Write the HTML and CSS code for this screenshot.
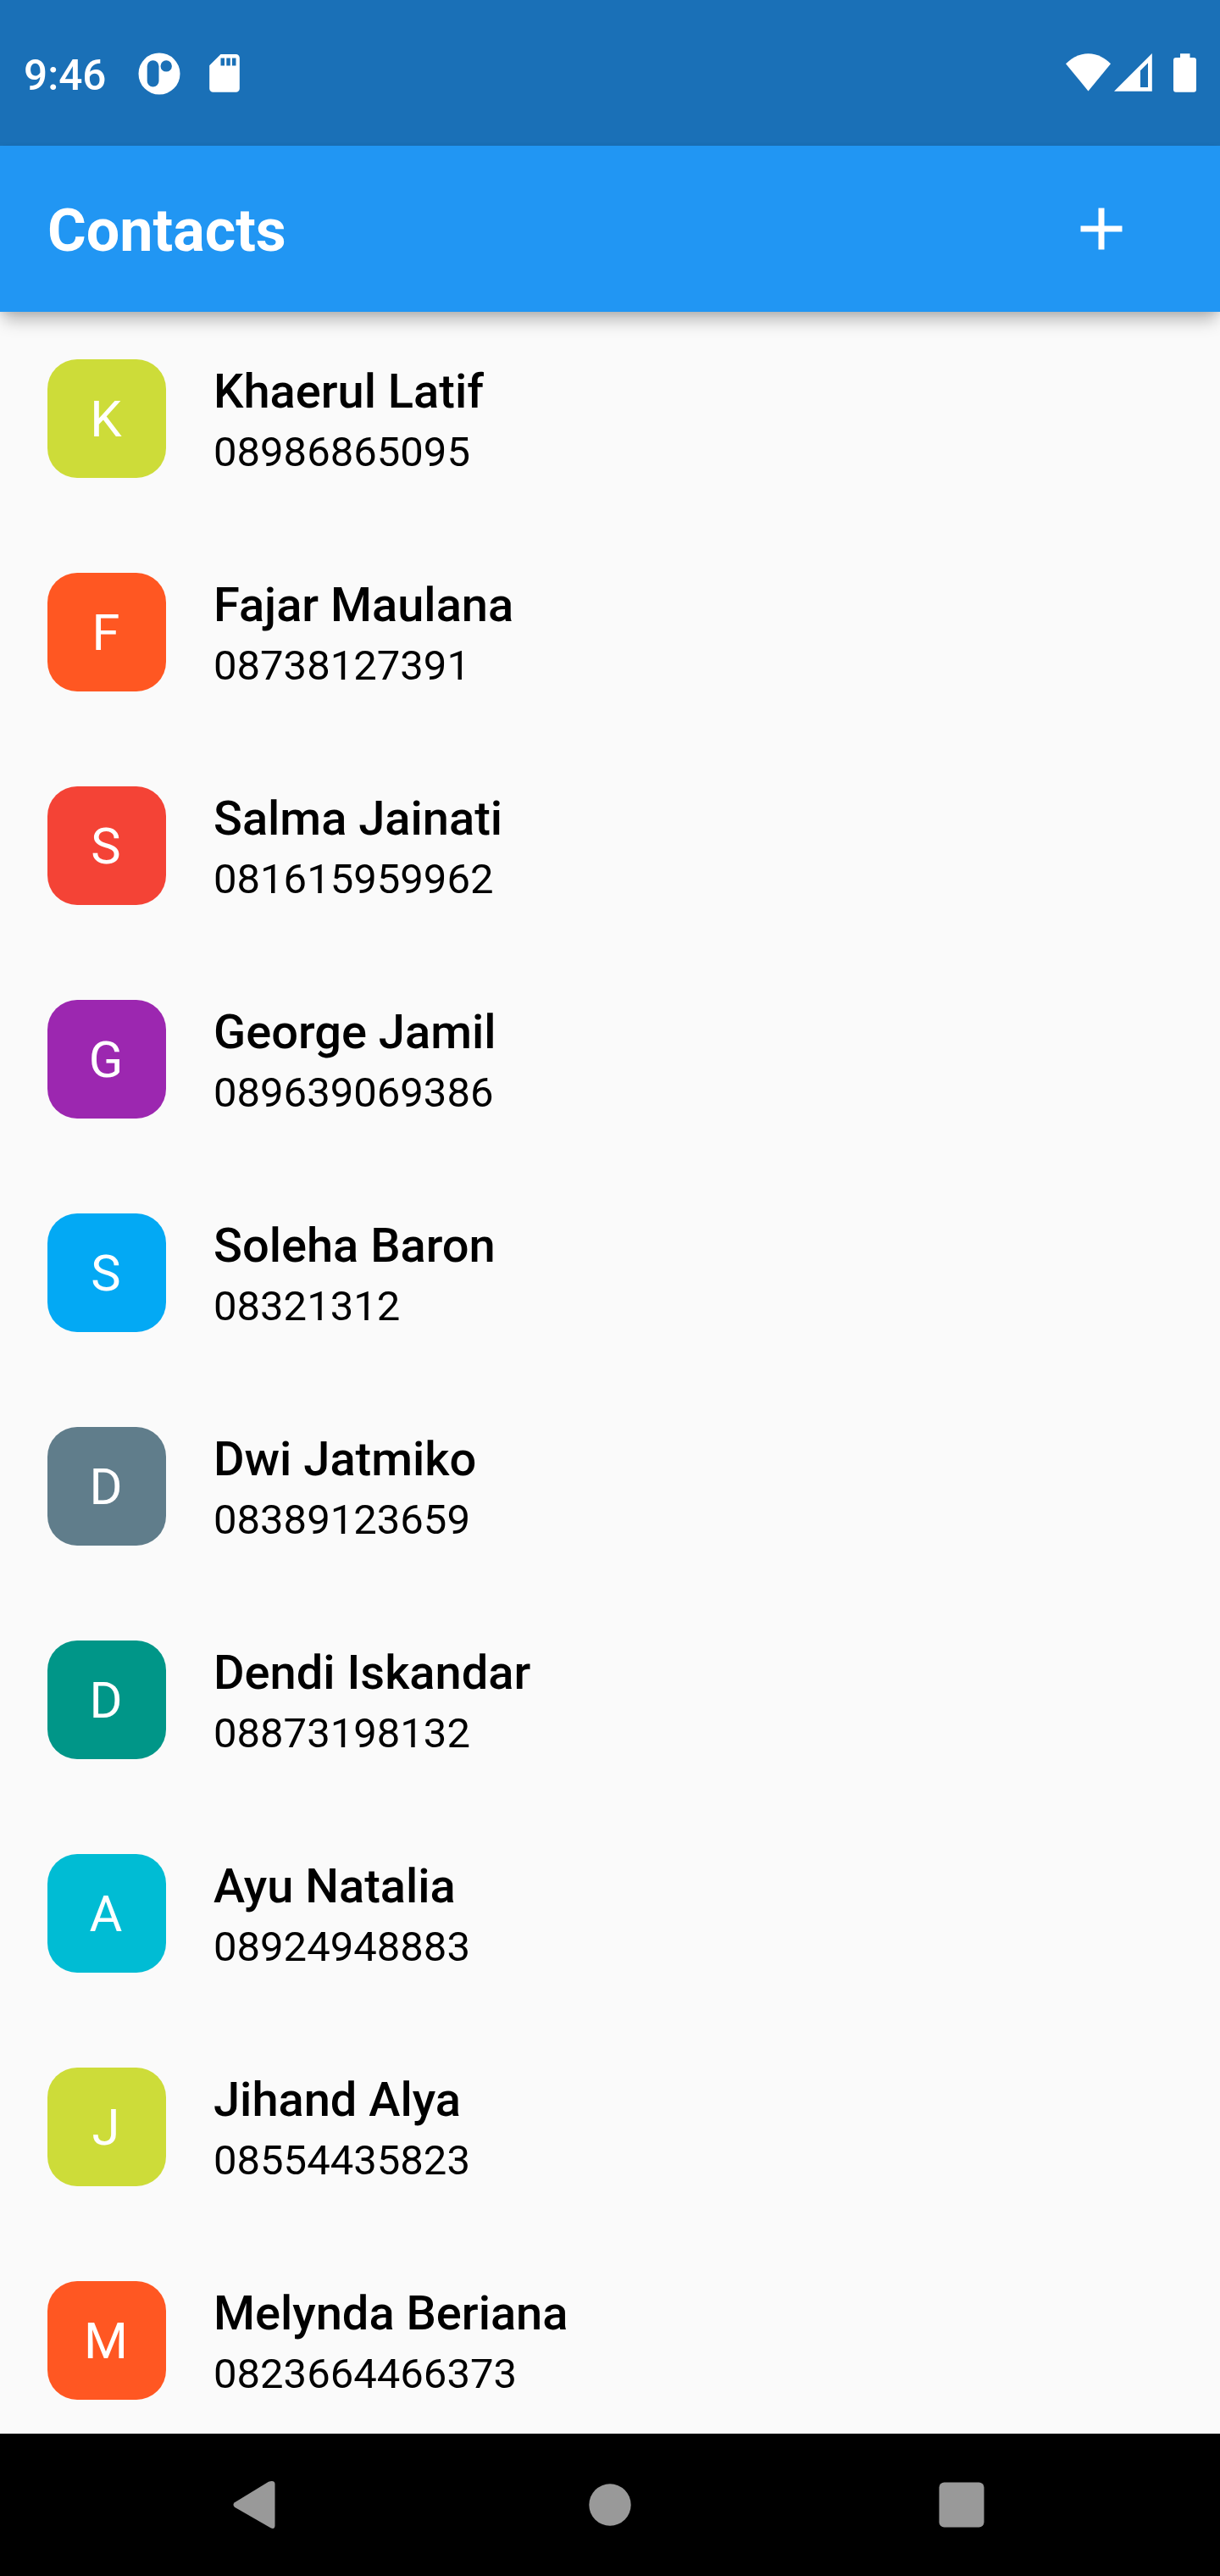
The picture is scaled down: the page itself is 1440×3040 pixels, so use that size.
FILE: index.html
```html
<!DOCTYPE html>
<html lang="en">
<head>
<meta charset="utf-8">
<title>Contacts</title>
<link rel="stylesheet" href="styles.css">
</head>
<body>
<div class="screen">
  <div class="status-bar">
    <span class="clock">9:46</span>
    <svg class="status-icon notification" viewBox="0 0 50 50" width="50" height="50">
      <path fill-rule="evenodd" d="M25 .5a24.5 24.5 0 1 0 0 49a24.5 24.5 0 1 0 0-49zM17.6 9.2a6.9 6.9 0 0 1 6.9 6.9v17.6a6.9 6.9 0 0 1-13.8 0V16.100a6.900 6.900 0 0 1 6.900-6.900zM33.200 9.200a6.700 6.700 0 1 1 0 13.400a6.700 6.700 0 1 1 0-13.400z"/>
    </svg>
    <svg class="status-icon sd-card" viewBox="0 0 36 45" width="36" height="45">
      <path fill-rule="evenodd" d="M13.500 0H31.500a4.300 4.300 0 0 1 4.300 4.300V40.400a4.300 4.300 0 0 1-4.300 4.300H4.500a4.300 4.300 0 0 1-4.300-4.300V13.300zM13.500 4.600v9h4.500v-9zM20.300 4.600v9h4.500v-9zM27 4.600v9h4.500v-9z"/>
    </svg>
    <div class="system-icons">
      <svg class="status-icon" viewBox="0 0 54 46" width="54" height="46">
        <path d="M26.500 44.500L0 12.200C7 5.500 15.500 .3 26.500 .3S46 5.500 53 12.200z"/>
      </svg>
      <svg class="status-icon signal" viewBox="0 0 46 46" width="46" height="46">
        <path fill-rule="evenodd" d="M0 44.700L44.800 0V44.700zM31 20.200V40H40V11.200z"/>
      </svg>
      <svg class="status-icon battery" viewBox="0 0 27 46" width="27" height="46">
        <path d="M8 .3H19.500V5H24a3 3 0 0 1 3 3V42.700a3 3 0 0 1-3 3H3a3 3 0 0 1-3-3V8a3 3 0 0 1 3-3H8z"/>
      </svg>
    </div>
  </div>
  <header class="app-bar">
    <h1 class="title">Contacts</h1>
    <button class="add-button" aria-label="Add contact">
      <svg viewBox="0 0 24 24" width="84" height="84"><path d="M19 13h-6v6h-2v-6H5v-2h6V5h2v6h6v2z"/></svg>
    </button>
  </header>
  <ul class="contacts">
    <li class="contact"><span class="avatar lime">K</span><div class="details"><span class="name">Khaerul Latif</span><span class="phone">08986865095</span></div></li>
    <li class="contact"><span class="avatar orange">F</span><div class="details"><span class="name">Fajar Maulana</span><span class="phone">08738127391</span></div></li>
    <li class="contact"><span class="avatar red">S</span><div class="details"><span class="name">Salma Jainati</span><span class="phone">081615959962</span></div></li>
    <li class="contact"><span class="avatar purple">G</span><div class="details"><span class="name">George Jamil</span><span class="phone">089639069386</span></div></li>
    <li class="contact"><span class="avatar light-blue">S</span><div class="details"><span class="name">Soleha Baron</span><span class="phone">08321312</span></div></li>
    <li class="contact"><span class="avatar blue-grey">D</span><div class="details"><span class="name">Dwi Jatmiko</span><span class="phone">08389123659</span></div></li>
    <li class="contact"><span class="avatar teal">D</span><div class="details"><span class="name">Dendi Iskandar</span><span class="phone">08873198132</span></div></li>
    <li class="contact"><span class="avatar cyan">A</span><div class="details"><span class="name">Ayu Natalia</span><span class="phone">08924948883</span></div></li>
    <li class="contact"><span class="avatar lime">J</span><div class="details"><span class="name">Jihand Alya</span><span class="phone">08554435823</span></div></li>
    <li class="contact"><span class="avatar orange">M</span><div class="details"><span class="name">Melynda Beriana</span><span class="phone">0823664466373</span></div></li>
  </ul>
  <nav class="nav-bar">
    <svg viewBox="0 0 60 60" width="60" height="60"><path d="M6.900 27.300L47 2.700Q54 .5 54.500 5V55Q54 59.500 49.500 57.300L6.900 32.700Q4 30 6.900 27.300z"/></svg>
    <svg class="home" viewBox="0 0 60 60" width="60" height="60"><circle cx="30" cy="30" r="24.700"/></svg>
    <svg viewBox="0 0 60 60" width="60" height="60"><rect x="3.500" y="3.500" width="53" height="53" rx="6"/></svg>
  </nav>
</div>
</body>
</html>
```
FILE: styles.css
```css
* {
  box-sizing: border-box;
}

body {
  margin: 0;
  font-family: Roboto, "Liberation Sans", sans-serif;
  background: #fafafa;
}

.screen {
  display: flex;
  flex-direction: column;
  width: 1440px;
  height: 3040px;
  overflow: hidden;
}

svg {
  display: block;
  flex: none;
}

.status-bar {
  flex: none;
  display: flex;
  align-items: flex-start;
  height: 172px;
  padding: 63px 28px 0;
  background: #1a70b7;
  color: #fff;
}

.clock {
  width: 96px;
  padding-top: 1px;
  font-size: 49.5px;
  font-weight: 500;
  line-height: 50px;
}

.status-icon {
  fill: #fff;
}

.notification {
  margin: -1px 0 0 39px;
}

.sd-card {
  margin: 1px 0 0 34px;
}

.system-icons {
  display: flex;
  margin-left: auto;
}

.signal {
  margin-left: 3px;
}

.battery {
  margin-left: 24px;
}

.app-bar {
  flex: none;
  display: flex;
  align-items: center;
  justify-content: space-between;
  height: 196px;
  padding: 0 56px;
  background: #2196f3;
  color: #fff;
  z-index: 1;
  box-shadow: 0 14px 18px -4px rgba(0, 0, 0, 0.26), 0 2px 8px rgba(0, 0, 0, 0.08);
}

.title {
  margin: 0;
  padding-top: 4px;
  font-size: 70px;
  font-weight: 700;
  line-height: 82px;
}

.add-button {
  width: 168px;
  height: 168px;
  padding: 42px;
  border: 0;
  background: none;
  fill: #fff;
}

.contacts {
  flex: 1;
  min-height: 0;
  margin: 0;
  padding: 0;
  list-style: none;
  overflow: hidden;
}

.contact {
  display: flex;
  gap: 56px;
  height: 252px;
  padding: 56px;
}

.avatar {
  flex: none;
  width: 140px;
  height: 140px;
  padding-right: 2px;
  border-radius: 35px;
  color: #fff;
  font-size: 59.5px;
  line-height: 142px;
  text-align: center;
}

.lime { background: #cddc39; }
.orange { background: #ff5722; }
.red { background: #f44336; }
.purple { background: #9c27b0; }
.light-blue { background: #03a9f4; }
.blue-grey { background: #607d8b; }
.teal { background: #009688; }
.cyan { background: #00bcd4; }

.details {
  display: flex;
  flex-direction: column;
  padding-top: 5px;
  color: #000;
}

.name {
  font-size: 56px;
  font-weight: 500;
  line-height: 66px;
}

.phone {
  margin-top: 10px;
  font-size: 49px;
  line-height: 58px;
}

.nav-bar {
  flex: none;
  display: flex;
  align-items: center;
  justify-content: space-between;
  height: 168px;
  padding: 0 275px 0 270px;
  background: #000;
  fill: #999;
}

.home {
  margin-left: 5px;
}
```
